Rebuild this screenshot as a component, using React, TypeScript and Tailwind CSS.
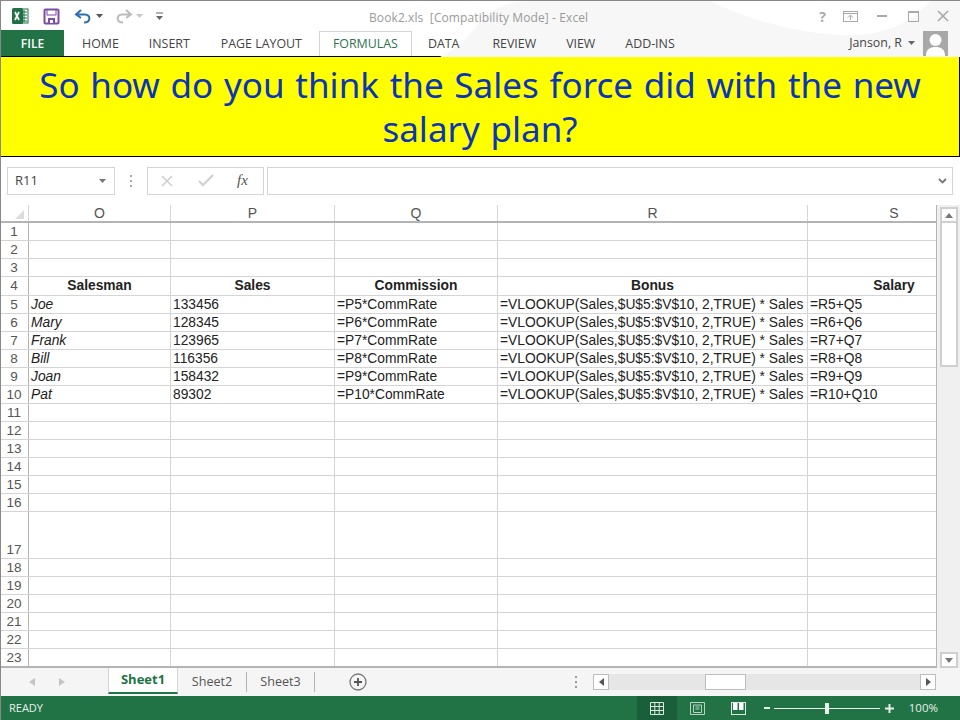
import React from 'react';

const columns = [
  { label: 'O', cls: 'w-[142px]' },
  { label: 'P', cls: 'w-[164px]' },
  { label: 'Q', cls: 'w-[163px]' },
  { label: 'R', cls: 'w-[310px]' },
  { label: 'S', cls: 'w-[173px]' },
];

const vlookup = '=VLOOKUP(Sales,$U$5:$V$10, 2,TRUE) * Sales';

const people: Record<number, string[]> = {
  5: ['Joe', '133456', '=P5*CommRate', vlookup, '=R5+Q5'],
  6: ['Mary', '128345', '=P6*CommRate', vlookup, '=R6+Q6'],
  7: ['Frank', '123965', '=P7*CommRate', vlookup, '=R7+Q7'],
  8: ['Bill', '116356', '=P8*CommRate', vlookup, '=R8+Q8'],
  9: ['Joan', '158432', '=P9*CommRate', vlookup, '=R9+Q9'],
  10: ['Pat', '89302', '=P10*CommRate', vlookup, '=R10+Q10'],
};

const headings = ['Salesman', 'Sales', 'Commission', 'Bonus', 'Salary'];
const rows = Array.from({ length: 23 }, (_, i) => i + 1);

// gaps between the ribbon tabs, FORMULAS is the open one
const tabs = [
  { label: 'HOME', cls: 'ml-[18px]' },
  { label: 'INSERT', cls: 'ml-[30px]' },
  { label: 'PAGE LAYOUT', cls: 'ml-[31px] mr-[17px]' },
  { label: 'FORMULAS', cls: '' },
  { label: 'DATA', cls: 'ml-[16px]' },
  { label: 'REVIEW', cls: 'ml-[33px]' },
  { label: 'VIEW', cls: 'ml-[30px]' },
  { label: 'ADD-INS', cls: 'ml-[30px]' },
];

function ExcelLogo() {
  return (
    <svg width="18" height="18" viewBox="0 0 18 18">
      <rect x="8" y="2" width="9" height="14" fill="#fff" stroke="#1f6f43" />
      <path d="M10 5h6M10 8h6M10 11h6M10 14h6M13 3v12" stroke="#1f6f43" />
      <rect x="1" y="1" width="11" height="16" rx="1.5" fill="#1f7244" />
      <path d="M4 5l4 8M8 5l-4 8" stroke="#fff" strokeWidth="1.7" />
    </svg>
  );
}

function SaveIcon() {
  return (
    <svg width="17" height="17" viewBox="0 0 17 17">
      <rect x="1.5" y="1.5" width="14" height="14" rx="1" fill="#fff" stroke="#7b4fa3" strokeWidth="2" />
      <rect x="4" y="2" width="9" height="5" fill="#fff" stroke="#7b4fa3" />
      <rect x="5" y="10" width="7" height="6" fill="#7b4fa3" />
      <rect x="7" y="12" width="3" height="3" fill="#fff" />
    </svg>
  );
}

function Caret({ color }: { color: string }) {
  return (
    <svg width="7" height="4" viewBox="0 0 7 4">
      <path d="M0 0h7L3.5 4z" fill={color} />
    </svg>
  );
}

function RibbonTabs() {
  return (
    <div className="relative flex h-[26px] items-end pl-[1px]">
      <div className="flex h-[26px] w-[63px] items-center justify-center bg-[#217346] pt-[1px] text-[12px] font-semibold text-white">FILE</div>
      <div className="flex h-[26px] items-end">
        {tabs.map(tab =>
          tab.label === 'FORMULAS' ? (
            <div key={tab.label} className="flex h-[25px] w-[93px] items-center justify-center border-x border-t border-[#d4d4d4] bg-white text-[12.4px] text-[#2e7250]">{tab.label}</div>
          ) : (
            <div key={tab.label} className={`flex h-[25px] items-center pt-[1px] text-[12.4px] text-[#444] ${tab.cls}`}>
              {tab.label}
            </div>
          ),
        )}
      </div>
      <div className="ml-auto flex h-[26px] items-center pr-[12px]">
        <span className="text-[12.4px] text-[#444]">Janson, R</span>
        <span className="ml-[6px] mr-[8px] flex"><Caret color="#666" /></span>
        <svg width="25" height="25" viewBox="0 0 25 25" className="self-end">
          <rect width="25" height="25" fill="#a8a8a8" />
          <circle cx="12.5" cy="9" r="6" fill="#fff" />
          <path d="M3 25c0-7 4-9 9.5-9S22 18 22 25z" fill="#fff" />
        </svg>
      </div>
    </div>
  );
}

function TitleBar() {
  return (
    <div className="relative flex h-[30px] items-center pl-[11px]">
      <svg className="absolute left-[440px] top-0" width="520" height="56" viewBox="0 0 520 56">
        <path d="M0 56C50 30 30 4 90 0h180c30 14 70 30 130 34 40 2 70-10 90-34h30v56z" fill="#f7f7f7" />
      </svg>
      <div className="relative flex items-center">
        <ExcelLogo />
        <span className="ml-[14px] flex"><SaveIcon /></span>
        <svg className="ml-[14px]" width="19" height="16" viewBox="0 0 19 16">
          <path d="M7 2L2 6.5 7 10M2.5 6.5H11c6 0 6 8-1 8" fill="none" stroke="#2f6fb0" strokeWidth="2" />
        </svg>
        <span className="ml-[3px] flex"><Caret color="#555" /></span>
        <svg className="ml-[11px]" width="19" height="16" viewBox="0 0 19 16">
          <path d="M12 2l5 4.5L12 10M16.5 6.5H8c-6 0-6 8 1 8" fill="none" stroke="#bdbdbd" strokeWidth="2" />
        </svg>
        <span className="ml-[3px] flex"><Caret color="#c8c8c8" /></span>
        <svg className="ml-[13px]" width="7" height="8" viewBox="0 0 7 8">
          <path d="M0 1h7" stroke="#666" />
          <path d="M0 4h7L3.5 8z" fill="#666" />
        </svg>
      </div>
      <span className="absolute left-[369px] top-[8px] text-[12px] tracking-[0.1px] text-[#9a9a9a]">Book2.xls&nbsp; [Compatibility Mode] - Excel</span>
      <div className="relative ml-auto flex items-center pr-[11px]">
        <span className="mr-[17px] text-[14px] font-bold text-[#a9a9a9]">?</span>
        <svg className="mr-[19px]" width="15" height="11" viewBox="0 0 15 11">
          <rect x=".5" y=".5" width="14" height="10" fill="none" stroke="#a9a9a9" />
          <path d="M1 2.5h13M7.5 9V4.5M5 6.5l2.5-2.500L10 6.500" fill="none" stroke="#a9a9a9" />
        </svg>
        <span className="mr-[21px] h-[2px] w-[10px] bg-[#a9a9a9]" />
        <span className="mr-[18px] h-[11px] w-[11px] border border-t-2 border-[#a9a9a9]" />
        <svg width="12" height="12" viewBox="0 0 12 12">
          <path d="M1 1l10 10M11 1L1 11" stroke="#a9a9a9" strokeWidth="1.6" />
        </svg>
      </div>
    </div>
  );
}

function FormulaBar() {
  return (
    <div className="flex h-[48px] items-center pb-[1px] pl-[7px] pr-[7px]">
      <div className="flex h-[28px] w-[108px] items-center justify-between border border-[#d4d4d4] pl-[7px] pr-[8px] font-['Open_Sans',sans-serif] text-[13px] text-[#444]">
        R11
        <Caret color="#777" />
      </div>
      <div className="ml-[15px] flex h-[12px] w-[2px] flex-col justify-between">
        <span className="h-[2px] w-[2px] bg-[#aaa]" />
        <span className="h-[2px] w-[2px] bg-[#aaa]" />
        <span className="h-[2px] w-[2px] bg-[#aaa]" />
      </div>
      <div className="ml-[15px] flex h-[28px] w-[117px] items-center border border-[#d4d4d4] pl-[13px]">
        <svg width="12" height="12" viewBox="0 0 12 12">
          <path d="M1 1l10 10M11 1L1 11" stroke="#cfcfcf" strokeWidth="1.6" />
        </svg>
        <svg className="ml-[25px]" width="16" height="13" viewBox="0 0 16 13">
          <path d="M1 7l4 4 10-10" fill="none" stroke="#cfcfcf" strokeWidth="2" />
        </svg>
        <span className="ml-[23px] font-['Liberation_Serif',serif] text-[15px] italic leading-none text-[#555]">fx</span>
      </div>
      <div className="ml-[3px] flex h-[28px] flex-1 items-center justify-end border border-[#d4d4d4] pr-[5px]">
        <svg width="9" height="6" viewBox="0 0 9 6">
          <path d="M1 1l3.500 3.500L8 1" fill="none" stroke="#777" strokeWidth="1.800" />
        </svg>
      </div>
    </div>
  );
}

function Sheet() {
  return (
    <div className="flex h-[463px] bg-white font-['Liberation_Sans',sans-serif]">
      <div className="w-[937px] shrink-0 overflow-hidden border-r border-b-2 border-[#b4b4b4]">
        <div className="flex h-[18px] border-b-2 border-[#b4b4b4]">
          <div className="flex w-[29px] shrink-0 items-end justify-end border-r border-[#d4d4d4] pb-[2px] pr-[4px]">
            <svg width="9" height="9" viewBox="0 0 9 9"><path d="M9 0v9H0z" fill="#dcdcdc" /></svg>
          </div>
          {columns.map(col => (
            <div key={col.label} className={`${col.cls} shrink-0 border-r border-[#d4d4d4] text-center text-[14px] leading-[17px] text-[#555]`}>
              {col.label}
            </div>
          ))}
        </div>
        {rows.map(row => {
          const cells = row === 4 ? headings : people[row];
          return (
            <div key={row} className={`flex border-b border-[#d4d4d4] ${row === 17 ? 'h-[47px]' : row === 4 ? 'h-[19px]' : 'h-[18px]'}`}>
              <div className={`flex w-[29px] shrink-0 justify-center border-r border-[#b4b4b4] text-[13.500px] leading-[17px] text-[#555] ${row === 17 ? 'items-end' : ''}`}>{row}</div>
              {columns.map((col, i) => (
                <div
                  key={col.label}
                  className={`${col.cls} shrink-0 overflow-hidden whitespace-nowrap border-r border-[#d4d4d4] text-[13.800px] leading-[17px] text-[#222] ${row === 4 ? 'text-center font-bold' : 'pl-[2px]'} ${row !== 4 && i === 0 ? 'italic' : ''}`}
                >
                  {cells ? cells[i] : ''}
                </div>
              ))}
            </div>
          );
        })}
      </div>
      <div className="flex w-[23px] flex-col bg-[#f0f0f0] pl-[3px] pr-[2px] pt-[2px]">
        <div className="flex h-[16px] items-center justify-center border-2 border-[#cfcfcf] bg-white">
          <svg width="8" height="5" viewBox="0 0 8 5"><path d="M0 5h8L4 0z" fill="#777" /></svg>
        </div>
        <div className="h-[144px] border-2 border-t-0 border-[#cfcfcf] bg-white" />
        <div className="mt-auto flex h-[16px] items-center justify-center border-2 border-[#cfcfcf] bg-white">
          <svg width="8" height="5" viewBox="0 0 8 5"><path d="M0 0h8L4 5z" fill="#777" /></svg>
        </div>
      </div>
    </div>
  );
}

function SheetTabs() {
  return (
    <div className="flex h-[28px] items-center bg-[#f5f5f5] pr-[24px] font-['Open_Sans',sans-serif]">
      <svg className="ml-[29px]" width="6" height="8" viewBox="0 0 6 8"><path d="M6 0v8L0 4z" fill="#c4c4c4" /></svg>
      <svg className="ml-[24px]" width="6" height="8" viewBox="0 0 6 8"><path d="M0 0v8l6-4z" fill="#c4c4c4" /></svg>
      <div className="ml-[43px] flex h-[26px] w-[70px] items-center justify-center self-start border-x border-b-2 border-x-[#d4d4d4] border-b-[#217346] bg-white text-[13px] font-bold text-[#217346]">Sheet1</div>
      <div className="flex h-[20px] w-[69px] items-center justify-center border-r border-[#b4b4b4] text-[12.600px] text-[#555]">Sheet2</div>
      <div className="flex h-[20px] w-[68px] items-center justify-center border-r border-[#b4b4b4] text-[12.600px] text-[#555]">Sheet3</div>
      <svg className="ml-[34px]" width="18" height="18" viewBox="0 0 18 18">
        <circle cx="9" cy="9" r="8" fill="none" stroke="#777" strokeWidth="1.300" />
        <path d="M9 5v8M5 9h8" stroke="#555" strokeWidth="1.800" />
      </svg>
      <div className="ml-[208px] flex h-[12px] w-[2px] flex-col justify-between">
        <span className="h-[2px] w-[2px] bg-[#999]" />
        <span className="h-[2px] w-[2px] bg-[#999]" />
        <span className="h-[2px] w-[2px] bg-[#999]" />
      </div>
      <div className="ml-[16px] flex h-[16px] flex-1 items-center bg-[#e6e6e6]">
        <div className="flex h-[16px] w-[16px] items-center justify-center border border-[#bdbdbd] bg-white">
          <svg width="5" height="8" viewBox="0 0 5 8"><path d="M5 0v8L0 4z" fill="#555" /></svg>
        </div>
        <div className="ml-[96px] h-[16px] w-[41px] border border-[#bdbdbd] bg-white" />
        <div className="ml-auto flex h-[16px] w-[16px] items-center justify-center border border-[#bdbdbd] bg-white">
          <svg width="5" height="8" viewBox="0 0 5 8"><path d="M0 0v8l5-4z" fill="#555" /></svg>
        </div>
      </div>
    </div>
  );
}

function StatusBar() {
  return (
    <div className="flex h-[24px] items-center bg-[#217346] pl-[9px] font-['Open_Sans',sans-serif] text-[11px] text-[#e8f0eb]">
      READY
      <div className="ml-auto flex h-full w-[40px] items-center justify-center bg-[#19603a]">
        <svg width="14" height="13" viewBox="0 0 14 13">
          <path d="M.5.500h13v12H.5zM.5 4.500h13M.5 8.500h13M4.800.500v12M9.200.500v12" fill="none" stroke="#dcebe2" />
        </svg>
      </div>
      <svg className="ml-[13px]" width="15" height="13" viewBox="0 0 15 13">
        <path d="M.5.500h14v12H.5zM3.500 3h8v7.500h-8zM5.500 5h4M5.500 7h4" fill="none" stroke="#b5d5c3" />
      </svg>
      <svg className="ml-[26px]" width="15" height="13" viewBox="0 0 15 13">
        <rect x=".5" y=".5" width="14" height="12" fill="none" stroke="#dcebe2" />
        <path d="M2 1h4.500v7H2zM8 1h4.500v7H8z" fill="#fff" />
      </svg>
      <span className="ml-[18px] h-[2px] w-[6px] bg-[#e8f0eb]" />
      <div className="relative ml-[4px] h-[1px] w-[106px] bg-[#e8f0eb]">
        <span className="absolute left-[51px] top-[-5px] h-[11px] w-[4px] bg-[#e8f0eb]" />
      </div>
      <svg className="ml-[5px]" width="9" height="9" viewBox="0 0 9 9"><path d="M4.500 0v9M0 4.500h9" stroke="#e8f0eb" strokeWidth="2" /></svg>
      <span className="ml-[15px] mr-[22px] text-[11.500px]">100%</span>
    </div>
  );
}

export default function App() {
  return (
    <div className="h-[720px] w-[960px] overflow-hidden border-l border-[#888] bg-white">
      <div className="h-[1px] bg-[#888]" />
      <div className="-ml-[1px] font-['Open_Sans',sans-serif]">
        <div className="h-[29px] overflow-visible"><TitleBar /></div>
        <RibbonTabs />
      </div>
      <div className="-ml-[1px] flex h-[101px] items-center justify-center border border-black bg-[#ffff00] px-[10px] text-center font-['Noto_Sans',sans-serif] text-[35px] leading-[44px] text-[#0a35b8] [word-spacing:1.6px]">
        So how do you think the Sales force did with the new salary plan?
      </div>
      <div className="-ml-[1px]">
        <FormulaBar />
        <Sheet />
        <SheetTabs />
        <StatusBar />
      </div>
    </div>
  );
}
